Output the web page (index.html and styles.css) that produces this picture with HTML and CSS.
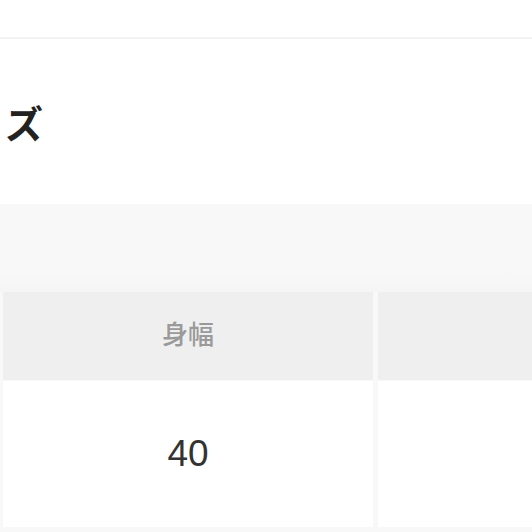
FILE: index.html
```html
<!DOCTYPE html>
<html lang="ja">
<head>
<meta charset="utf-8">
<link rel="stylesheet" href="styles.css">
</head>
<body>
<header class="topbar"></header>
<section class="title-area">
  <h1 class="title">ズ</h1>
</section>
<section class="panel">
  <div class="table">
    <div class="cell head">身幅</div>
    <div class="cell head"></div>
    <div class="cell body">40</div>
    <div class="cell body"></div>
  </div>
</section>
</body>
</html>
```

FILE: styles.css
```css
html, body {
  margin: 0;
  padding: 0;
  width: 532px;
  height: 532px;
  overflow: hidden;
  background: #f8f8f8;
  font-family: "Noto Sans CJK JP", "Liberation Sans", sans-serif;
}
.topbar {
  height: 37px;
  background: #ffffff;
  border-bottom: 2px solid #f2f2f2;
}
.title-area {
  height: 165px;
  background: #ffffff;
  display: flex;
  align-items: flex-start;
}
.title {
  margin: 61px 0 0 5px;
  font-size: 38px;
  line-height: 44px;
  font-weight: 700;
  color: #222222;
}
.panel {
  background: #f8f8f8;
  padding: 88px 0 0 3px;
  background-image: linear-gradient(to bottom, #f8f8f8 0, #f8f8f8 66px, #f5f5f5 88px, #f8f8f8 88px);
}
.table {
  display: grid;
  grid-template-columns: 370px 1fr;
  grid-template-rows: 88px 146px;
  column-gap: 5px;
  row-gap: 1px;
}
.cell {
  display: flex;
  align-items: center;
  justify-content: center;
}
.head {
  background: #efefef;
  color: #9a9a9a;
  font-size: 26px;
  font-weight: 500;
  padding-bottom: 8px;
  box-sizing: border-box;
}
.body {
  background: #ffffff;
  color: #333333;
  font-family: "Liberation Sans", "Noto Sans", sans-serif;
  font-size: 37px;
}
```
